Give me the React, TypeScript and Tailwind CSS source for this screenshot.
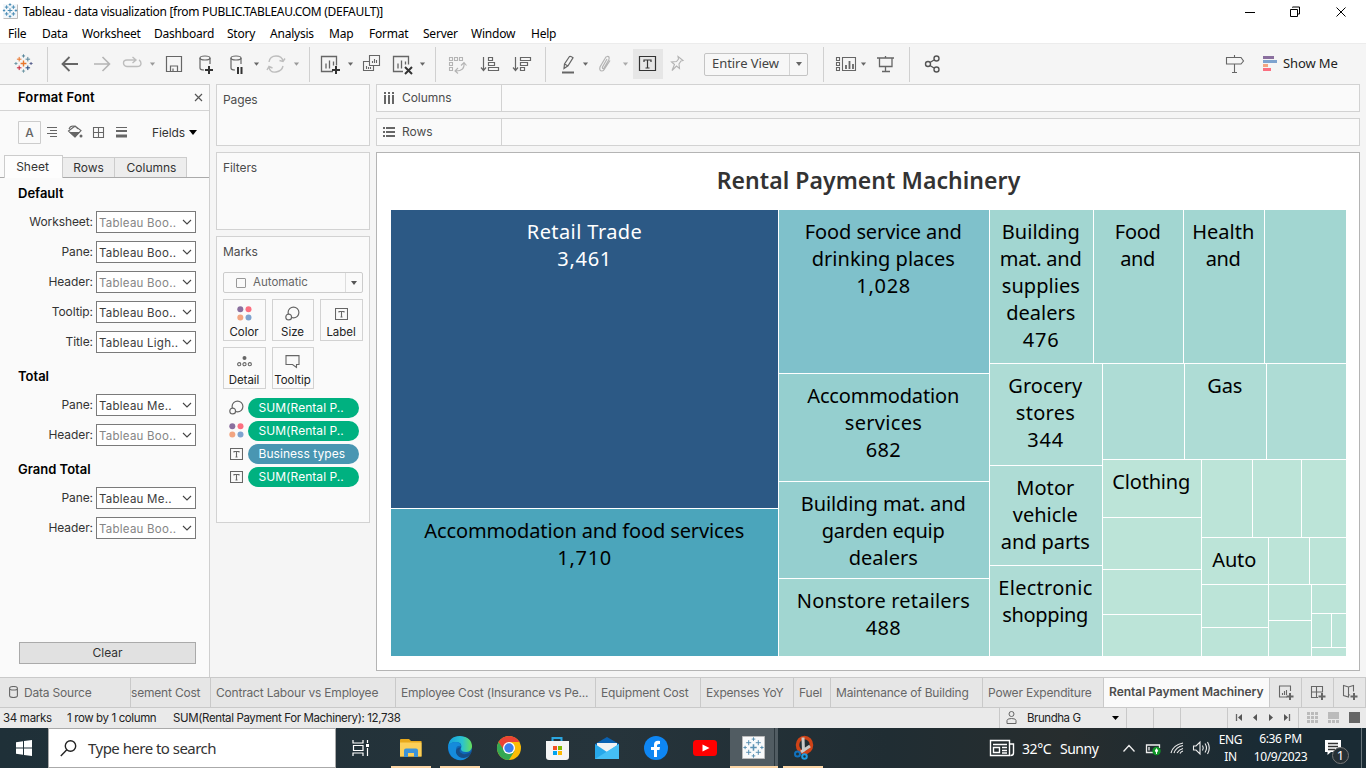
import React from "react";

type Kids = { children?: React.ReactNode };

/* An icon cell of the toolbar or taskbar; the drawing uses window coordinates. */
const Cell = ({ x, w, y = 44, h = 40, c = "#666", children }: Kids & { x: number; w: number; y?: number; h?: number; c?: string }) => (
  <svg className="block shrink-0" width={w} height={h} viewBox={`${x} ${y} ${w} ${h}`} fill="none" stroke={c} strokeWidth={1.4}>
    {children}
  </svg>
);

const Caret = ({ x, y = 62.5, c = "#666", s = 2.6 }: { x: number; y?: number; c?: string; s?: number }) => (
  <path d={`M${x - s} ${y}h${s * 2}l${-s} ${s + 0.6}z`} fill={c} stroke="none" />
);

const Sep = () => <div className="h-[35px] w-px shrink-0 bg-[#d0d0d0]" />;

const plus = (x: number, y: number, c: string, s = 2, w = 1) => (
  <path key={`${x}-${y}`} d={`M${x - s} ${y}h${s * 2}M${x} ${y - s}v${s * 2}`} stroke={c} strokeWidth={w} />
);

const TableauMark = ({ x, y, k = 1, mono }: { x: number; y: number; k?: number; mono?: string }) => (
  <g>
    {plus(x, y, mono ?? "#e8762d", 2.7 * k, 1.3 * k)}
    {plus(x, y - 7 * k, mono ?? "#59879b", 1.5 * k)}
    {plus(x, y + 7 * k, mono ?? "#7199a6", 1.5 * k)}
    {plus(x - 7 * k, y, mono ?? "#7199a6", 1.4 * k)}
    {plus(x + 7 * k, y, mono ?? "#5b6591", 1.4 * k)}
    {plus(x - 4 * k, y - 4 * k, mono ?? "#e8762d", 2.1 * k)}
    {plus(x + 4 * k, y - 4 * k, mono ?? "#5b879b", 2.1 * k)}
    {plus(x - 4 * k, y + 4 * k, mono ?? "#c72035", 2.1 * k)}
    {plus(x + 4 * k, y + 4 * k, mono ?? "#1f447e", 2.1 * k)}
  </g>
);

const menu: [string, string][] = [
  ["File", "w-[34px]"], ["Data", "w-[40px]"], ["Worksheet", "w-[72px]"], ["Dashboard", "w-[73px]"], ["Story", "w-[43px]"],
  ["Analysis", "w-[59px]"], ["Map", "w-[40px]"], ["Format", "w-[54px]"], ["Server", "w-[48px]"], ["Window", "w-[60px]"], ["Help", "w-[40px]"],
];

const TitleBar = () => (
  <header className="h-[43px] bg-white font-['Noto_Sans',sans-serif] text-[12px] text-black">
    <div className="flex h-[23px] items-center">
      <Cell x={0} w={23} y={0} h={23}>
        <path d="M3.5 18.500h14v-14" stroke="#bbb" strokeWidth={1} />
        <rect x={3} y={4} width={14} height={14} fill="#f3f7fa" stroke="none" />
        <TableauMark x={10} y={10.5} k={0.85} mono="#4a8db5" />
      </Cell>
      <span className="tracking-[-0.3px]">Tableau - data visualization [from PUBLIC.TABLEAU.COM (DEFAULT)]</span>
      <div className="ml-auto">
        <Cell x={1230} w={136} y={0} h={20} c="#000">
          <g strokeWidth={1}>
            <path d="M1245 10.500h10M1292.500 5.500v-0.500h7v7h-1.500M1290.500 7.500h7v7h-7zM1336.500 5.500l9 9M1345.500 5.500l-9 9" />
          </g>
        </Cell>
      </div>
    </div>
    <nav className="flex h-[20px] items-center pt-[2px] pl-2">
      {menu.map(([m, w]) => (
        <span key={m} className={`${w} shrink-0 tracking-[-0.22px]`}>{m}</span>
      ))}
    </nav>
  </header>
);

const Toolbar = () => (
  <div className="flex h-[41px] items-center border-t border-[#ececec] bg-[#f5f5f5]">
    <Cell x={0} w={47}><TableauMark x={23.5} y={63.5} k={1.08} /></Cell>
    <Sep />
    <Cell x={48} w={38}><path d="M63 64h15M69.500 57l-7 7 7 7" strokeWidth={1.8} /></Cell>
    <Cell x={86} w={30} c="#b4b4b4"><path d="M94 64h15M102.500 57l7 7-7 7" strokeWidth={1.6} /></Cell>
    <Cell x={116} w={44} c="#bdbdbd">
      <path d="M135 60h-8q-3.500 0-3.500 3t3.500 3.500h10q4 0 4-3 0-2.500-2-3.500M132.500 57l3.500 3-3.500 3" />
      <Caret x={152.500} c="#999" />
    </Cell>
    <Cell x={160} w={30}><path d="M166.500 56.500h15v15h-15zM170.500 71v-5h7v5M173 71v-2.500" strokeWidth={1.2} /></Cell>
    <Cell x={190} w={34}>
      <g strokeWidth={1.2}><ellipse cx={205} cy={58} rx={5} ry={2} /><path d="M200 58v10q0 2 4 2M210 58v6" /></g>
      <path d="M209 66v8M205 70h8" stroke="#333" strokeWidth={2} />
    </Cell>
    <Cell x={224} w={40}>
      <g strokeWidth={1.2}><ellipse cx={236} cy={58} rx={5} ry={2} /><path d="M231 58v10q0 2 4 2M241 58v6" /></g>
      <path d="M238 67v7M241.500 67v7" stroke="#333" strokeWidth={2} /><Caret x={256.500} />
    </Cell>
    <Cell x={264} w={45} c="#bdbdbd">
      <path d="M269 62q1-6 7-6t7 5M283 66q-1 5-7 6t-7-5M279.500 60.500l3.500 1 2-3M267 70l2-3.500 3.500 1.500" /><Caret x={296.500} c="#999" />
    </Cell>
    <Sep />
    <Cell x={310} w={46}>
      <path d="M333 71.500h-11.500v-15h15v9M326 68.500v-5M329.500 68.500v-8M333.500 65.500v-4" strokeWidth={1.3} />
      <path d="M336 66v8M332 70h8" stroke="#333" strokeWidth={2} /><Caret x={350.500} />
    </Cell>
    <Cell x={356} w={32}>
      <path d="M369.500 55.500h10v10h-10zM369 61.500h-5.500v9h10V66M372.500 63v-2M374.500 63v-4M376.500 63v-3M366.500 69v-3M368.500 69v-2M370.500 69v-2" strokeWidth={1.1} />
    </Cell>
    <Cell x={388} w={47}>
      <path d="M403 71.500h-9.500v-15h15v8M398 68.500v-5M401.500 68.500v-8M405.500 64.500v-3" strokeWidth={1.3} />
      <path d="M405 67l7 7M412 67l-7 7" stroke="#333" strokeWidth={2} /><Caret x={422.500} />
    </Cell>
    <Sep />
    <Cell x={436} w={38} c="#b4b4b4">
      <path d="M449.500 57.500h3v3h-3zM454.500 57.500h3v3h-3zM459.500 57.500h3v3h-3zM449.500 62.500h3v3h-3zM449.500 67.500h3v3h-3zM464 63q1 8-8 8M461 65.500l3-3 2.500 3M458 68l-3 3 3 2.500" strokeWidth={1.1} />
    </Cell>
    <Cell x={474} w={32}>
      <path d="M483.500 57v13M481 67.500l2.500 3 2.500-3M488.500 57.500h4v3h-4zM488.500 62.500h6v3h-6zM488.500 67.500h10v3h-10z" strokeWidth={1.2} />
    </Cell>
    <Cell x={506} w={39}>
      <path d="M515.500 57v13M513 67.500l2.500 3 2.500-3M520.500 57.500h10v3h-10zM520.500 62.500h7v3h-7zM520.500 67.500h4v3h-4z" strokeWidth={1.2} />
    </Cell>
    <Sep />
    <Cell x={546} w={45}>
      <path d="M564 68.500l.500-4.500 5-7.500q1.500-.500 3.500 1.300l-5 8zM564.500 64l3.500 2" strokeWidth={1.2} /><path d="M562 72.500h12" strokeWidth={2} /><Caret x={585.500} />
    </Cell>
    <Cell x={591} w={42} c="#b4b4b4">
      <path d="M607 59l-4.500 8q-.500 2 1.200 1.500l5-8.500q1.500-4-1.700-3.500-1 0-2 2l-5 8.500q-1 4 2 4 1.500 0 2.500-2l5.500-8.500" strokeWidth={1.2} /><Caret x={625.500} c="#aaa" />
    </Cell>
    <div className="flex h-[30px] w-[30px] items-center justify-center bg-[#e6e6e6]">
      <Cell x={633} w={30} y={49} h={30} c="#333"><path d="M639.500 56.500h16v14h-16zM644 62v-2h7v2M647.500 60v8M645.500 68h4" strokeWidth={1.2} /></Cell>
    </div>
    <Cell x={663} w={41} c="#b4b4b4"><path d="M678 56.500l5 4-2 .500-2 3 .500 4.500-3-2.500-4.500 4.500 2.500-6-3-2.500 5-.500 2-2.500z" strokeWidth={1.1} /></Cell>
    <div className="flex h-[23px] w-[104px] shrink-0 items-center rounded-[2px] border border-[#c4c4c4] bg-[#f7f7f7]">
      <span className="w-[84px] pl-[7px] font-['Noto_Sans',sans-serif] text-[13px] tracking-[-0.05px] text-[#444]">Entire View</span>
      <span className="flex h-full w-[18px] items-center justify-center border-l border-[#d4d4d4]"><svg width="6" height="4"><path d="M0 0h6l-3 4z" fill="#666" /></svg></span>
    </div>
    <Cell x={808} w={15} />
    <Sep />
    <Cell x={824} w={46}>
      <path d="M836.500 57.500h3v3h-3zM836.500 62.500h3v3h-3zM836.500 67.500h3v3h-3zM842.500 57.500h13v13h-13z" strokeWidth={1.1} />
      <path d="M846 69v-4M849.500 69v-8M853 69v-5" strokeWidth={1.8} /><Caret x={863.500} />
    </Cell>
    <Cell x={870} w={39}><path d="M877 58h17M879.500 58v8.500h12.500v-8.500M885.500 56v2M885.500 66v5M882 71.500h8" strokeWidth={1.3} /></Cell>
    <Sep />
    <Cell x={910} w={40} c="#555"><circle cx={928} cy={64} r={2.500} /><circle cx={936.500} cy={58.500} r={2.500} /><circle cx={936.500} cy={69.500} r={2.500} /><path d="M930 62.500l4-2.500M930 65.500l4 2.500" /></Cell>
    <div className="ml-auto flex h-full items-center">
      <Cell x={1214} w={69}>
        <path d="M1226.500 57.500h14.500l2.500 3.500-2.500 3h-14.500zM1234.500 55v2.500M1234.500 64v8M1232 72.500h5" strokeWidth={1.1} />
        <g stroke="none"><path d="M1263 56h11v3h-11z" fill="#8a6f9e" /><path d="M1263 60h14v3h-14z" fill="#7ea3cf" /><path d="M1263 64h5v3h-5z" fill="#f2a581" /><path d="M1263 68h8v3h-8z" fill="#fb6f80" /></g>
      </Cell>
      <span className="w-[83px] font-['Noto_Sans',sans-serif] text-[13px] tracking-[-0.1px] text-[#222]">Show Me</span>
    </div>
  </div>
);

const Field = ({ label, value, dim }: { label: string; value: string; dim?: boolean }) => (
  <div className="flex h-[30px] items-start pr-[13px]">
    <span className="mr-[3px] flex-1 pt-[2px] text-right leading-[18px] tracking-[-0.08px] text-[#333]">{label}:</span>
    <div className={`flex h-[22px] w-[100px] items-center border border-[#7a7a7a] bg-white pl-[2px] ${dim ? "text-[#858585]" : "text-[#3c3c3c]"}`}>
      <span className="w-[83px] pt-[3px] text-[11.5px] tracking-[0.24px] whitespace-nowrap">{value}</span>
      <svg width="10" height="6" fill="none" stroke="#444" strokeWidth="1.1"><path d="M1 1l4 4 4-4" /></svg>
    </div>
  </div>
);

const Heading = ({ children }: Kids) => (
  <h3 className="h-[22px] pl-[18px] text-[13px] leading-[16px] font-semibold tracking-[0px] text-black">{children}</h3>
);

const FormatPane = () => (
  <aside className="flex h-[593px] w-[210px] shrink-0 flex-col border-t border-r border-[#cfcfcf] bg-[#fafafa] text-[12px]">
    <div className="flex h-[26px] items-center border-b border-[#d4d4d4] pl-[18px]">
      <b className="w-[176px] text-[13px] font-semibold tracking-[0.15px] text-black">Format Font</b>
      <svg width="9" height="9" stroke="#555" strokeWidth="1.2"><path d="M1 1l7 7M8 1L1 8" /></svg>
    </div>
    <div className="flex h-[43px] items-center pl-[18px]">
      <Cell x={18} w={134} y={121} h={23}>
        <path d="M18.500 121.500h22v22h-22z" stroke="#ccc" strokeWidth={1} />
        <text x={29.500} y={137} textAnchor="middle" fill="#666" stroke="none" fontSize={12} fontWeight={500}>A</text>
        <path d="M47 127.500h10M50 130.500h7M47 133.500h10M50 136.500h7" strokeWidth={1} />
        <path d="M68.500 131l6.500-5 6 4.500-6 6.500zM69 129q1-3 4-3t5 3" strokeWidth={1.1} /><path d="M69 132h11l-5 5.500z" fill="#666" stroke="none" /><circle cx={81} cy={136} r={1.500} fill="#666" stroke="none" />
        <path d="M93.500 127.500h10v10h-10zM98.500 127.500v10M93.500 132.500h10" strokeWidth={1.1} />
        <path d="M116 127.500h11" strokeWidth={1} /><path d="M116 131h11" strokeWidth={2} /><path d="M116 136h11" strokeWidth={3} />
      </Cell>
      <span className="flex items-center tracking-[-0.1px] text-[#333]">Fields<svg className="ml-[4px]" width="8" height="5"><path d="M0 0h8l-4 5z" fill="#000" /></svg></span>
    </div>
    <div className="flex h-[24px] items-end border-b border-[#aaa] text-[#333]">
      <span className="-mb-px ml-1 flex h-[23px] w-[59px] items-center justify-center border border-b-0 border-[#ccc] bg-[#fdfdfd] pr-[2px]">Sheet</span>
      <span className="flex h-[20px] w-[52px] items-center justify-center border-t border-r border-[#ccc] bg-[#ededed]">Rows</span>
      <span className="flex h-[20px] w-[72px] items-center justify-center border-t border-r border-[#ccc] bg-[#ededed] pl-[2px]">Columns</span>
    </div>
    <div className="pt-[7px]">
      <Heading>Default</Heading>
      <div className="pt-[4px]">
        <Field label="Worksheet" value="Tableau Boo.." dim />
        <Field label="Pane" value="Tableau Boo.." />
        <Field label="Header" value="Tableau Boo.." dim />
        <Field label="Tooltip" value="Tableau Boo.." />
        <Field label="Title" value="Tableau Ligh.." />
      </div>
    </div>
    <div className="pt-[7px]">
      <Heading>Total</Heading>
      <div className="pt-[4px]">
        <Field label="Pane" value="Tableau Me.." />
        <Field label="Header" value="Tableau Boo.." dim />
      </div>
    </div>
    <div className="pt-[7px]">
      <Heading>Grand Total</Heading>
      <div className="pt-[4px]">
        <Field label="Pane" value="Tableau Me.." />
        <Field label="Header" value="Tableau Boo.." dim />
      </div>
    </div>
    <div className="mt-auto mb-[13px] ml-[19px] flex h-[22px] w-[177px] items-center justify-center border border-[#aaa] bg-[#e1e1e1] text-[#333]">Clear</div>
  </aside>
);

const Dots = () => (
  <svg width="15" height="15"><circle cx="3.300" cy="3.300" r="3" fill="#8a6f9e" /><circle cx="11.500" cy="3.300" r="3" fill="#fb6f80" /><circle cx="3.300" cy="11.500" r="3" fill="#f2a581" /><circle cx="11.500" cy="11.500" r="3" fill="#7ea3cf" /></svg>
);
const SizeIcon = () => (
  <svg width="15" height="15" fill="#fafafa" stroke="#666" strokeWidth="1.200"><circle cx="8.500" cy="6.500" r="5.400" /><circle cx="3.700" cy="11" r="2.900" /></svg>
);
const TIcon = () => (
  <svg width="13" height="12" fill="none" stroke="#666" strokeWidth="1.100"><path d="M.5.5h12v11H.5zM4 4.500v-1h5v1M6.500 3.500v5.500M5.500 9h2" /></svg>
);
const DetailIcon = () => (
  <svg width="15" height="11" fill="none" stroke="#666" strokeWidth="1.100"><circle cx="7.500" cy="2" r="2" fill="#666" stroke="none" /><circle cx="2.200" cy="8.200" r="1.600" /><circle cx="7.500" cy="8.200" r="1.600" /><circle cx="12.800" cy="8.200" r="1.600" /></svg>
);
const TipIcon = () => (
  <svg width="15" height="14" fill="none" stroke="#666" strokeWidth="1.100"><path d="M1 .600h13v8.900h-2.500v3l-4-3H1z" /></svg>
);

const MarkButton = ({ label, icon, w }: { label: string; icon: React.ReactNode; w: string }) => (
  <div className={`${w} flex h-[42px] flex-col items-center border border-[#d2d2d2] bg-[#fafafa] pr-px`}>
    <span className="flex h-[25px] items-center justify-center pt-[2px]">{icon}</span>
    <span className="pt-px text-[11.5px] leading-[13px] tracking-[-0.05px] whitespace-nowrap text-[#222]">{label}</span>
  </div>
);

const Pill = ({ icon, color, children }: Kids & { icon: React.ReactNode; color: string }) => (
  <div className="flex h-[23px] items-center">
    <span className="flex w-[28px] justify-center">{icon}</span>
    <span className={`${color} -ml-[2px] flex h-[20px] w-[111px] items-center rounded-full pl-[10.5px] text-[12px] tracking-[0.05px] whitespace-nowrap text-white`}>{children}</span>
  </div>
);

const Cards = () => (
  <div className="flex w-[154px] shrink-0 flex-col gap-[6px] text-[12px] tracking-[-0.1px] text-[#4c4c4c]">
    <section className="h-[62px] border border-[#d2d2d2] bg-[#fafafa] px-[6px] pt-[7px] leading-[16px]">Pages</section>
    <section className="h-[78px] border border-[#d2d2d2] bg-[#fafafa] px-[6px] pt-[7px] leading-[16px]">Filters</section>
    <section className="h-[287px] border border-[#d2d2d2] bg-[#fafafa] px-[6px] pt-[7px]">
      <div className="leading-[16px]">Marks</div>
      <div className="mt-[12px] flex h-[21px] w-[140px] items-center rounded-[2px] border border-[#ccc]">
        <span className="mr-[7px] ml-[12px] h-[10px] w-[10px] rounded-[1px] border border-[#999]" />
        <span className="w-[92px] pt-px text-[11.500px] tracking-[0px] text-[#666]">Automatic</span>
        <span className="flex h-full flex-1 items-center justify-center border-l border-[#ddd]"><svg width="6" height="4"><path d="M0 0h6l-3 4z" fill="#555" /></svg></span>
      </div>
      <div className="mt-[6px] flex w-[140px] flex-wrap gap-[6px]">
        <MarkButton w="w-[43px]" label="Color" icon={<Dots />} />
        <MarkButton w="w-[42px]" label="Size" icon={<SizeIcon />} />
        <MarkButton w="w-[43px]" label="Label" icon={<TIcon />} />
        <MarkButton w="w-[43px]" label="Detail" icon={<DetailIcon />} />
        <MarkButton w="w-[42px]" label="Tooltip" icon={<TipIcon />} />
      </div>
      <div className="mt-[7px] -ml-[1px]">
        <Pill icon={<SizeIcon />} color="bg-[#00b180]">SUM(Rental P..</Pill>
        <Pill icon={<Dots />} color="bg-[#00b180]">SUM(Rental P..</Pill>
        <Pill icon={<TIcon />} color="bg-[#4996b2]">Business types</Pill>
        <Pill icon={<TIcon />} color="bg-[#00b180]">SUM(Rental P..</Pill>
      </div>
    </section>
  </div>
);

/* x, y, right, bottom, fill, lines of the label with their widths */
type Tile = { b: [number, number, number, number]; f: string; t?: [string, number][]; light?: boolean };
const tiles: Tile[] = [
  { b: [391, 210, 778, 508], f: "#2c5985", t: [["Retail Trade", 115], ["3,461", 54]], light: true },
  { b: [391, 509, 778, 656], f: "#4ba5bb", t: [["Accommodation and food services", 320], ["1,710", 54]] },
  { b: [779, 210, 989, 373], f: "#7fc1cb", t: [["Food service and", 157], ["drinking places", 143], ["1,028", 54]] },
  { b: [779, 374, 989, 481], f: "#95cfcf", t: [["Accommodation", 152], ["services", 77], ["682", 35]] },
  { b: [779, 482, 989, 578], f: "#95cfcf", t: [["Building mat. and", 165], ["garden equip", 123], ["dealers", 69]] },
  { b: [779, 579, 989, 656], f: "#a1d6d1", t: [["Nonstore retailers", 173], ["488", 35]] },
  { b: [990, 210, 1093, 363], f: "#a2d6d1", t: [["Building", 78], ["mat. and", 82], ["supplies", 78], ["dealers", 69], ["476", 36]] },
  { b: [1094, 210, 1183, 363], f: "#a2d6d1", t: [["Food", 46], ["and", 35]] },
  { b: [1184, 210, 1264, 363], f: "#a2d6d1", t: [["Health", 62], ["and", 35]] },
  { b: [1265, 210, 1346, 363], f: "#a2d6d1" },
  { b: [990, 364, 1102, 465], f: "#aedcd5", t: [["Grocery", 74], ["stores", 59], ["344", 36]] },
  { b: [990, 466, 1102, 565], f: "#aedcd5", t: [["Motor", 58], ["vehicle", 65], ["and parts", 89]] },
  { b: [990, 566, 1102, 656], f: "#aedcd5", t: [["Electronic", 94], ["shopping", 86]] },
  { b: [1103, 364, 1184, 459], f: "#aedcd5" },
  { b: [1185, 364, 1266, 459], f: "#aedcd5", t: [["Gas", 35]] },
  { b: [1267, 364, 1346, 459], f: "#aedcd5" },
  { b: [1103, 460, 1201, 517], f: "#bce4d8", t: [["Clothing", 78]] },
  { b: [1103, 518, 1201, 569], f: "#bce4d8" },
  { b: [1103, 570, 1201, 614], f: "#bce4d8" },
  { b: [1103, 615, 1201, 656], f: "#bce4d8" },
  { b: [1202, 460, 1252, 537], f: "#bce4d8" },
  { b: [1253, 460, 1301, 537], f: "#bce4d8" },
  { b: [1302, 460, 1346, 537], f: "#bce4d8" },
  { b: [1202, 538, 1268, 584], f: "#bce4d8", t: [["Auto", 44]] },
  { b: [1269, 538, 1309, 584], f: "#bce4d8" },
  { b: [1310, 538, 1346, 584], f: "#bce4d8" },
  { b: [1202, 585, 1268, 627], f: "#bce4d8" },
  { b: [1202, 628, 1268, 656], f: "#bce4d8" },
  { b: [1269, 585, 1311, 620], f: "#bce4d8" },
  { b: [1269, 621, 1311, 656], f: "#bce4d8" },
  { b: [1312, 585, 1346, 613], f: "#bce4d8" },
  { b: [1312, 614, 1331, 647], f: "#bce4d8" },
  { b: [1332, 614, 1346, 647], f: "#bce4d8" },
  { b: [1312, 648, 1346, 656], f: "#bce4d8" },
];

const Treemap = () => (
  <svg className="block font-['Noto_Sans',sans-serif] text-[20px]" width={955} height={446} viewBox="391 210 955 446">
    {tiles.map(({ b: [x, y, r, d], f, t, light }) => (
      <g key={`${x}-${y}`}>
        <rect x={x} y={y} width={r - x} height={d - y} fill={f} />
        {t?.map(([s, w], i) => (
          <text key={i} x={(x + r) / 2 - (x > 778 ? 0.7 : 0.2)} y={y + 29 + i * 27} textAnchor="middle" textLength={w} fill={light ? "#fff" : "#000"}>{s}</text>
        ))}
      </g>
    ))}
  </svg>
);

const Shelf = ({ label, children }: Kids & { label: string }) => (
  <div className="flex h-[28px] items-center border border-[#d2d2d2] bg-[#fafafa] text-[12px] text-[#4c4c4c]">
    <span className="flex h-full w-[125px] items-center border-r border-[#d2d2d2] pl-[6px]">
      {children}
      <span className="ml-[7px] tracking-[-0.05px]">{label}</span>
    </span>
  </div>
);

const View = () => (
  <div className="flex min-w-0 flex-1 flex-col gap-[6px] pr-[6px]">
    <Shelf label="Columns"><svg width="12" height="12" fill="#666"><path d="M1 0h2v2H1zM5 0h2v2H5zM9 0h2v2H9zM1 3h2v9H1zM5 3h2v9H5zM9 3h2v9H9z" /></svg></Shelf>
    <Shelf label="Rows"><svg width="12" height="10" fill="#666"><path d="M0 0h2v2H0zM0 4h2v2H0zM0 8h2v2H0zM3 0h9v2H3zM3 4h9v2H3zM3 8h9v2H3z" /></svg></Shelf>
    <section className="h-[519px] border border-[#b4b4b4] bg-white pl-[14px]">
      <h1 className="flex h-[57px] w-[955px] items-center justify-center pb-[2px] font-['Noto_Sans',sans-serif] text-[23px] font-semibold tracking-[0.06px] text-[#333]">Rental Payment Machinery</h1>
      <Treemap />
    </section>
  </div>
);

const tabs: [string, string][] = [
  ["Contract Labour vs Employee", "w-[185px]"], ["Employee Cost (Insurance vs Pe...", "w-[200px]"], ["Equipment Cost", "w-[105px]"],
  ["Expenses YoY", "w-[93px]"], ["Fuel", "w-[37px]"], ["Maintenance of Building", "w-[152px]"], ["Power Expenditure", "w-[121px]"],
];

const SheetTabs = () => (
  <div className="flex h-[31px] border-y border-[#c9c9c9] bg-[#e6e6e6] text-[12px] tracking-[-0.19px] whitespace-nowrap text-[#666]">
    <span className="flex w-[131px] shrink-0 items-center border-r border-[#c9c9c9] pl-[9px]">
      <svg className="mr-[6px] mb-[2px]" width="9" height="12" fill="none" stroke="#666" strokeWidth="1.100"><path d="M.600 2.500v7q0 2 3.900 2t3.900-2v-7q0-2-3.900-2t-3.900 2q0 1.500 3.900 1.500t3.900-1.500" /></svg>
      Data Source
    </span>
    <span className="flex w-[80px] shrink-0 items-center border-r border-[#c9c9c9]">sement Cost</span>
    {tabs.map(([t, w]) => (
      <span key={t} className={`${w} flex shrink-0 items-center border-r border-[#c9c9c9] pl-[5px]`}>{t}</span>
    ))}
    <span className="flex w-[166px] shrink-0 items-center border-r border-[#c9c9c9] bg-[#fafafa] pb-[2px] pl-[5px] font-semibold tracking-[-0.03px] text-[#4c4c4c]">Rental Payment Machinery</span>
    <Cell x={1270} w={96} y={678} h={29}>
      <path d="M1287 697h-7.500v-11h11v5M1282.500 695v-2M1284.500 695v-4M1286.500 695v-5M1318 697.500h-6.500v-11h11v6M1316.500 686.500v11M1311.500 692h11M1350 695l-1.500-.500v2.500l-5-1.500v-10l5 1.500 5-1.500v6M1348.500 687v9" strokeWidth={1.1} />
      <path d="M1290 693v7M1286.500 696.500h7M1322 693v7M1318.500 696.500h7M1354 693v7M1350.500 696.500h7" strokeWidth={2} />
      <path d="M1301.500 678v29M1333.500 678v29M1365.500 678v29" stroke="#c9c9c9" strokeWidth={1} />
    </Cell>
  </div>
);

const StatusBar = () => (
  <div className="flex h-[20px] items-center bg-[#eaeaea] text-[11.5px] whitespace-nowrap text-[#222]">
    <span className="w-[64px] pt-px pl-[3px] tracking-[-0.3px]">34 marks</span>
    <span className="w-[109px] pt-px pl-[3px] tracking-[-0.38px]">1 row by 1 column</span>
    <span className="pt-px tracking-[-0.37px]">SUM(Rental Payment For Machinery): 12,738</span>
    <div className="ml-auto flex h-full items-center">
      <span className="flex h-full w-[128px] items-center border-x border-[#c9c9c9] pl-[6px]">
        <svg className="mr-[9px]" width="12" height="14" fill="none" stroke="#666"><circle cx="5.500" cy="3" r="2.500" /><path d="M1 12.500v-3q0-2 4.500-2t4.500 2v3z" /></svg>
        <span className="w-[85px] pt-px tracking-[-0.45px]">Brundha G</span>
        <svg width="8" height="5"><path d="M0 0h7l-3.500 4z" fill="#000" /></svg>
      </span>
      <span className="h-full w-[27px] border-r border-[#c9c9c9]" />
      <span className="h-full w-[27px] border-r border-[#c9c9c9]" />
      <span className="h-full w-[47px] border-r border-[#c9c9c9]" />
      <Cell x={1228} w={138} y={708} h={20}>
        <path d="M1236.500 714v7M1289.500 714v7" strokeWidth={1.3} />
        <path d="M1242 714v7l-4-3.500zM1257 714v7l-4-3.500zM1269 714v7l4-3.500zM1284 714v7l4-3.500z" fill="#555" stroke="none" />
        <path d="M1298.500 708v20" stroke="#c9c9c9" strokeWidth={1} />
        <path d="M1307 712h3v3h-3zM1311 712h3v3h-3zM1315 712h3v3h-3zM1307 716h3v3h-3zM1311 716h3v3h-3zM1315 716h3v3h-3zM1307 720h3v3h-3zM1311 720h3v3h-3zM1315 720h3v3h-3zM1328 712h11v7h-11zM1328 720h3v3h-3zM1332 720h3v3h-3zM1336 720h3v3h-3z" fill="#bbb" stroke="none" />
        <path d="M1349 712h11v11h-11z" fill="#666" stroke="none" />
      </Cell>
    </div>
  </div>
);

const Task = ({ x, w, children }: Kids & { x: number; w: number }) => <Cell x={x} w={w} y={728} h={40} c="none">{children}</Cell>;

const Taskbar = () => (
  <footer className="flex h-[40px] items-center bg-[linear-gradient(90deg,#1f3038,#26343b_45%,#202d33_65%,#272d2e_78%,#1a2b34_92%)] font-['Noto_Sans',sans-serif] text-[12px] text-white">
    <Task x={0} w={48}><path d="M16 742.200l7-1v6.300h-7zM24 741l8-1v7.500h-8zM16 748.500h7v6.300l-7-1zM24 748.500h8v7.500l-8-1z" fill="#fff" /></Task>
    <div className="flex h-full w-[288px] items-center border border-[#aaa] bg-white pl-[11px] text-[15px] tracking-[-0.53px] text-[#333]">
      <svg className="mr-[11px]" width="17" height="17" fill="none" stroke="#222" strokeWidth="1.400"><circle cx="10.500" cy="6" r="5.200" /><path d="M6.800 9.800L.8 16" /></svg>
      Type here to search
    </div>
    <Task x={336} w={50}><path d="M353 740v3h10v-3M353 756v-3h10v3M353.500 745.500h9.500v5h-9.500zM367.500 740v3M367.500 748v8" stroke="#fff" strokeWidth={1.2} /><path d="M366 744h3v3h-3z" fill="#fff" /></Task>
    <Task x={386} w={49}>
      <path d="M401 739h8l2 2h10.500v15.500h-21.500v-17z" fill="#e8a91c" /><path d="M400 742.500h21.500v14h-21.500z" fill="#fbcf59" /><path d="M404 757v-6.500q0-2 2-2h10q2 0 2 2v6.500h-4v-4h-6v4z" fill="#3c93d8" />
      <path d="M391 766h40v2h-40z" fill="#fbd5a5" />
    </Task>
    <Task x={435} w={49}>
      <defs><linearGradient id="edge" x1="0" x2="1"><stop stopColor="#149fe0" /><stop offset=".6" stopColor="#2cc3cf" /><stop offset="1" stopColor="#67df59" /></linearGradient></defs>
      <circle cx={460} cy={748} r={12} fill="#0e68b8" />
      <path d="M448 747q1-11 12-11 12 1 12 11-1 5-6 5-5 0-5-3 2-7-5-7-6 0-8 5z" fill="url(#edge)" />
      <path d="M448 747q2-5 8-5 4 0 5 4-5-1-5 4 1 5 7 7 4 0 6-1-4 5-11 4-9-2-10-13z" fill="#158bdb" /><path d="M461 747q-4 5 2 7 5 1 9-3-2 6-8 7-6 0-8-5-1-5 5-6z" fill="#164e88" />
      <path d="M440 766h40v2h-40z" fill="#fbd5a5" />
    </Task>
    <Task x={484} w={49}>
      <circle cx={509} cy={748} r={12} fill="#fbbc05" /><path d="M498.600 742a12 12 0 0 1 20.800 0h-10.400l-5.500 9z" fill="#ea4335" /><path d="M498.600 742a12 12 0 0 0 10.400 18l5.500-9h-10z" fill="#34a853" />
      <circle cx={509} cy={748} r={6} fill="#fff" /><circle cx={509} cy={748} r={4.700} fill="#3b7ded" />
    </Task>
    <Task x={533} w={49}>
      <path d="M552.500 742v-4h9v4" stroke="#2ba7e2" strokeWidth={2} /><path d="M546 741h23v16q0 3-3 3h-17q-3 0-3-3z" fill="#f5f5f5" />
      <path d="M553 746h4v4h-4z" fill="#f25022" /><path d="M558 746h4v4h-4z" fill="#7fba00" /><path d="M553 751h4v4h-4z" fill="#00a4ef" /><path d="M558 751h4v4h-4z" fill="#ffb900" />
    </Task>
    <Task x={582} w={49}><path d="M595 744l12-7 12 7v5h-24z" fill="#0a62b2" /><path d="M597 743h20v9h-20z" fill="#f2f2f2" /><path d="M595 744l12 8 12-8v15h-24z" fill="#27a8ea" /><path d="M595 759l24-15v15z" fill="#45bff5" /></Task>
    <Task x={631} w={49}><circle cx={656} cy={748} r={12} fill="#0e86f3" /><path d="M654 757v-7h-3v-3h3v-2q0-5 6-4v3q-3-.500-3 1.500v1.500h3l-.500 3h-2.500v7z" fill="#fff" /></Task>
    <Task x={680} w={50}><rect x={693} y={740} width={24} height={16} rx={3.500} fill="#f00" /><path d="M702.500 744.500l7 3.500-7 3.500z" fill="#fff" /></Task>
    <div className="h-full bg-[#515c62]">
      <Task x={730} w={48}>
        <path d="M774 728h1v40h-1z" fill="#2d383e" /><path d="M742.500 736.500h22v22h-22z" fill="#f8fafb" stroke="#bbb" strokeWidth={1} /><TableauMark x={753.500} y={747.500} k={1.2} mono="#5b92b3" />
        <path d="M730 766h48v2h-48z" fill="#fbd5a5" />
      </Task>
    </div>
    <Task x={778} w={60}>
      <ellipse cx={804.500} cy={745} rx={7} ry={7.500} stroke="#cf4317" strokeWidth={3.500} />
      <path d="M803 737.500l.500 14M810 746l-9 6" stroke="#c9c9c9" strokeWidth={3} />
      <circle cx={797.500} cy={754} r={2.500} stroke="#1272bd" strokeWidth={2} /><circle cx={804.500} cy={756.500} r={2.300} stroke="#1e9be0" strokeWidth={2} />
      <path d="M783 766h40v2h-40z" fill="#fbd5a5" />
    </Task>
    <div className="ml-auto flex h-full items-center">
      <Task x={984} w={38}><path d="M990.500 740.500h19v15h-19zM1010 744h3.500v9q0 2.500-3 2.500M993.500 747.500h6v5h-6zM993 744.500h14M1002 747.500h5M1002 750.500h5M1002 753h5" stroke="#fff" strokeWidth={1.400} /></Task>
      <span className="w-[38px] text-[14px] tracking-[-0.4px]">32°C</span>
      <span className="w-[54px] text-[14px] tracking-[-0.5px]">Sunny</span>
      <Task x={1114} w={101}>
        <g stroke="#eee" strokeWidth={1.3}>
          <path d="M1123.500 751.500l5.500-6 5.500 6M1153 752.500h-6.500v-7.500h13v3M1149 747v3.500" />
          <path d="M1171 753q2-8 12-10M1174 753q2-6 9-7.500M1177 753q2-3.500 6-4.500M1180 753.500q1-2 3-2.500" strokeWidth={1.100} />
          <path d="M1193.500 746h2.500l4-4v12l-4-4h-2.500zM1202.500 745.500q1.500 2.500 0 5M1205 743.500q3 4.500 0 9M1207.500 742q3.500 6 0 12" strokeWidth={1.100} />
        </g>
        <circle cx={1156.500} cy={751} r={4.200} fill="#119828" /><path d="M1156.500 748l1.700 2.700-1.200 1.800v1.500h-1v-1.500l-1.200-1.800z" fill="#fff" />
      </Task>
      <span className="w-[31px] text-center leading-[17px] tracking-[-0.400px]">ENG<br />IN</span>
      <span className="w-[69px] text-center leading-[18px] tracking-[-0.38px]">6:36 PM<br />10/9/2023</span>
      <Task x={1315} w={51}>
        <path d="M1325 740h16v12h-10l-3.500 3v-3h-2.500z" fill="#fff" /><path d="M1328 743.500h10M1328 746.500h10M1328 749.500h7" stroke="#333" />
        <circle cx={1340.500} cy={755.500} r={8} fill="#263035" stroke="#777" strokeWidth={1} />
        <text x={1340.500} y={760} textAnchor="middle" fontSize={13} fill="#fff">1</text><path d="M1361.500 728v40" stroke="#68747a" strokeWidth={1} />
      </Task>
    </div>
  </footer>
);

export default function App() {
  return (
    <div className="flex h-[768px] w-[1366px] flex-col overflow-hidden bg-[#f5f5f5] font-['Inter',sans-serif]">
      <TitleBar />
      <Toolbar />
      <main className="flex h-[593px] gap-[6px]">
        <FormatPane />
        <Cards />
        <View />
      </main>
      <SheetTabs />
      <StatusBar />
      <Taskbar />
    </div>
  );
}
